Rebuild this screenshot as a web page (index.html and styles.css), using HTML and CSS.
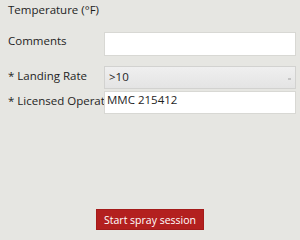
FILE: index.html
```html
<!DOCTYPE html>
<html lang="en">
<head>
    <meta charset="UTF-8">
    <meta name="viewport" content="width=device-width, initial-scale=1.0">
    <title>Spray Session</title>
    <link rel="stylesheet" href="styles.css">
</head>
<body>
    <div class="panel">
        <div class="row row-temp">
            <label class="lbl">Temperature (°F)</label>
        </div>

        <div class="row row-comments">
            <label class="lbl" for="comments">Comments</label>
            <input type="text" id="comments" class="field">
        </div>

        <div class="row row-landing">
            <label class="lbl" for="landing">* Landing Rate</label>
            <div class="field select" id="landing">
                <span>&gt;10</span>
                <span class="arrow"></span>
            </div>
        </div>

        <div class="row row-operator">
            <label class="lbl" for="operator">* Licensed Operator</label>
            <input type="text" id="operator" class="field operator" value="MMC 215412">
        </div>

        <div class="actions">
            <button type="button" class="start-btn">Start spray session</button>
        </div>
    </div>
</body>
</html>
```

FILE: styles.css
```css
* {
    margin: 0;
    padding: 0;
    box-sizing: border-box;
}

body {
    font-family: "Open Sans", "Noto Sans", sans-serif;
    font-size: 11.5px;
    line-height: 14px;
    color: #1e1e1e;
    background-color: #e6e6e2;
    width: 300px;
    height: 240px;
    overflow: hidden;
}

.panel {
    padding: 0 4px 0 8px;
}

.row {
    display: grid;
    grid-template-columns: 96px 192px;
    height: 23px;
}

.lbl {
    display: block;
    white-space: nowrap;
    padding-top: 3px;
}

.row-temp {
    height: 32px;
}

.row-comments {
    height: 24px;
    margin-bottom: 10px;
}

.row-comments .lbl {
    padding-top: 2px;
}

.row-landing {
    margin-bottom: 2px;
}

.field {
    z-index: 1;
    height: 100%;
    border: 1px solid #d8d8d4;
    background-color: #ffffff;
    font-family: inherit;
    font-size: 11.5px;
    color: #1e1e1e;
    outline: none;
}

.select {
    display: flex;
    justify-content: space-between;
    align-items: flex-start;
    padding: 3px 4px 0 4px;
    border-color: #d2d2d0;
    background: linear-gradient(#efefef, #e4e4e4);
}

.arrow {
    width: 3px;
    height: 2px;
    margin-top: 8px;
    background-color: #c4c4c4;
}

.operator {
    padding: 0 2px;
    padding-bottom: 6px;
}

.actions {
    display: flex;
    justify-content: center;
    padding: 95px 4px 0 0;
}

.start-btn {
    width: 108px;
    height: 21px;
    background-color: #b3201f;
    border: 1px solid #a41b1a;
    color: #ffffff;
    font-family: inherit;
    font-size: 10.5px;
}
```
